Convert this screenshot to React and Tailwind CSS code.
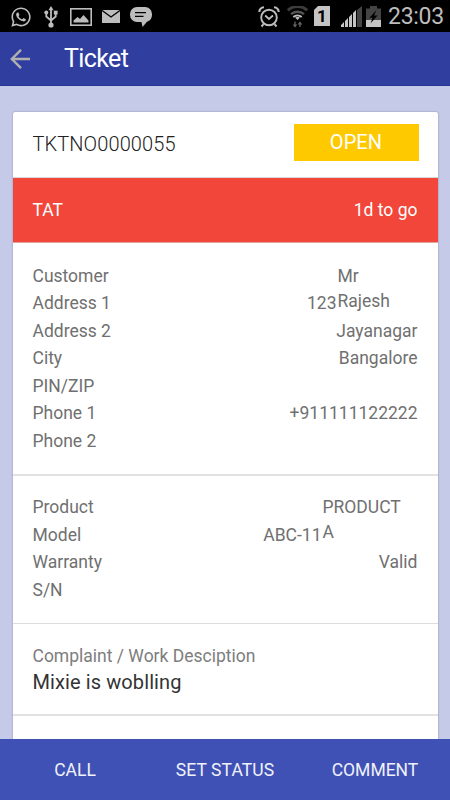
import React from 'react';
import { FaWhatsapp } from 'react-icons/fa';

const customerRows = [
  { label: 'Customer', value: 'Mr Rajesh', valueClass: 'w-[80px] pr-5 leading-[25px] pt-[1px]' },
  { label: 'Address 1', value: '123', valueClass: 'mr-[81px]' },
  { label: 'Address 2', value: 'Jayanagar' },
  { label: 'City', value: 'Bangalore' },
  { label: 'PIN/ZIP', value: '' },
  { label: 'Phone 1', value: '+911111122222' },
  { label: 'Phone 2', value: '' },
];

const productRows = [
  { label: 'Product', value: 'PRODUCT A', valueClass: 'w-[95px] pr-3 leading-[25px] pt-[1px]' },
  { label: 'Model', value: 'ABC-11', valueClass: 'mr-[96px]' },
  { label: 'Warranty', value: 'Valid' },
  { label: 'S/N', value: '' },
];

const StatusBar = () => (
  <div className="h-8 shrink-0 bg-black flex items-center justify-between pl-[10px] pr-[7px] text-[#bdbdbd]">
    <div className="flex items-center">
      <FaWhatsapp className="w-[22px] h-[22px] mt-[1px]" />
      <svg className="w-[14px] h-[22px] ml-[12px] mt-[2px]" viewBox="0 0 14 22" fill="none" stroke="currentColor" strokeWidth="1.8">
        <path d="M7 3v16M2.300 7v3.500L7 14.500M11.700 7v3.500L7 14.500" />
        <path d="M7 0l2.600 4.200H4.400z" fill="currentColor" stroke="none" />
        <circle cx="7" cy="19" r="2.600" fill="currentColor" stroke="none" />
        <circle cx="2.300" cy="6.500" r="2" fill="currentColor" stroke="none" />
        <path d="M9.800 4.700h3.800v3.800H9.800z" fill="currentColor" stroke="none" />
      </svg>
      <svg className="w-[22px] h-[18px] ml-[12px] mt-[2px]" viewBox="0 0 22 18" fill="none">
        <rect x="0.8" y="0.8" width="20.4" height="16.4" stroke="currentColor" strokeWidth="1.6" />
        <path d="M3.500 14.500v-2l4-3.500 2.500 2 3.500-4 5 5.500v2z" fill="currentColor" />
      </svg>
      <svg className="w-[18px] h-[13px] ml-[10px] mt-[1px]" viewBox="0 0 18 13">
        <rect width="18" height="13" fill="currentColor" />
        <path d="M0 0.500l9 6.500 9-6.500" fill="none" stroke="#000" strokeWidth="1.400" />
      </svg>
      <svg className="w-[22px] h-[20px] ml-[10px] mt-[2px]" viewBox="0 0 22 20">
        <path
          d="M7 0h8a7 7 0 0 1 7 7v1a7 7 0 0 1-5 6.700L12.500 20l-1-5H7a7 7 0 0 1-7-7V7a7 7 0 0 1 7-7z"
          fill="currentColor"
        />
        <path d="M5 5.700h11M5 9.300h8.500" stroke="#000" strokeWidth="1.300" />
      </svg>
    </div>

    <div className="flex items-center">
      <svg className="w-[22px] h-[22px] mt-[2px]" viewBox="0 0 22 22" fill="none" stroke="currentColor">
        <circle cx="11" cy="11.500" r="7.800" strokeWidth="1.900" />
        <path d="M1.300 6C1.500 3.500 3.500 1.500 6 1.300M20.700 6C20.500 3.500 18.500 1.500 16 1.300" strokeWidth="2.100" />
        <path d="M5.500 18.200l-2 2.300M16.500 18.200l2 2.300" strokeWidth="2" />
        <path d="M7.200 9.500l3.800 3.500 4-3.500" strokeWidth="1.800" />
      </svg>
      <svg className="w-[21px] h-[22px] ml-[7px] mt-[1px]" viewBox="0 0 21 22" fill="none">
        <path d="M0.800 4.300a14.500 14.500 0 0 1 19.400 0" stroke="#3c3c3c" strokeWidth="3" />
        <path d="M4 8.200a10 10 0 0 1 13 0" stroke="#555" strokeWidth="2.400" />
        <path d="M6.300 11a6.500 6.500 0 0 1 8.400 0" stroke="#bdbdbd" strokeWidth="1.800" />
        <path d="M10.500 14l-2.300-2.200a3.400 3.400 0 0 1 4.600 0z" fill="#bdbdbd" />
        <path d="M8 15.500v4.500M13 21v-4.500" stroke="#666" strokeWidth="1.300" />
        <path d="M5.700 18.500h4.600L8 21.500zM10.700 18.500h4.600L13 15.500z" fill="#666" />
      </svg>
      <div className="w-[16px] h-[20px] ml-[6px] bg-[#c4c4c4] text-black text-[17px] font-bold leading-[21px] text-center [clip-path:polygon(25%_0,100%_0,100%_100%,0_100%,0_20%)]">
        1
      </div>
      <svg className="w-[21px] h-[21px] ml-[11px]" viewBox="0 0 21 21">
        <path d="M0 21v-2l3-3v5zM4 21v-6l3-3v9zM8 21V11l3-3v13zM12 21V7l3-3v17z" fill="#c4c4c4" />
        <path d="M16 21V4l5-4v21z" fill="#444" />
      </svg>
      <svg className="w-[15px] h-[21px] ml-[4px]" viewBox="0 0 15 21">
        <path d="M4 0h7v2.500h4V15H0V2.500h4z" fill="#444" />
        <path d="M0 14h15v7H0z" fill="#c4c4c4" />
        <path d="M10.500 4L3.500 11.800h3.200L4.500 17.500l7-8H8z" fill="#000" />
      </svg>
      <span className="w-[55px] text-right ml-[7px] text-[23px] leading-8 mt-[1px] text-[#bdbdbd] tracking-[-0.3px]">23:03</span>
    </div>
  </div>
);

const Header = () => (
  <div className="h-[54px] shrink-0 bg-[#303f9f] border-b border-[#283593] flex items-center pl-[10px] text-white">
    <svg className="w-[21px] h-[20px] text-[#b0b0b0]" viewBox="0 0 21 20" fill="none" stroke="currentColor" strokeWidth="2.400">
      <path d="M20 10H1.800M11 0.800L1.800 10l9.200 9.200" />
    </svg>
    <h1 className="ml-[33px] text-[25px] tracking-[-0.600px]">Ticket</h1>
  </div>
);

const InfoRow = ({ label, value, valueClass = '' }) => (
  <div className="flex justify-between h-[27.5px] leading-[27.5px]">
    <span>{label}</span>
    <span className={valueClass}>{value}</span>
  </div>
);

const App = () => {
  return (
    <div className="h-[800px] w-[450px] flex flex-col overflow-hidden bg-[#c5cae9] font-[Roboto,sans-serif]">
      <StatusBar />
      <Header />

      <div className="flex-1 min-h-0 overflow-hidden pt-[26px] px-[12.5px]">
        <div className="h-[700px] bg-white rounded-[2px] shadow-[0_0_2px_rgba(0,0,0,0.35)] text-[17.5px] text-[#707070]">
          <div className="h-[66px] flex items-center justify-between pl-5 pr-[19px] border-b border-[#d8d8d8]">
            <span className="text-[20px] font-light tracking-[0.1px] -mt-[1px] text-[#212121]">TKTNO0000055</span>
            <span className="w-[125px] h-[37px] mb-[4px] bg-[#ffc900] text-white text-[20px] leading-[37px] tracking-[0.1px] text-center">
              OPEN
            </span>
          </div>

          <div className="h-[65px] flex items-center justify-between px-5 bg-[#f14639] border-b border-[#e0a5a0] text-white">
            <span>TAT</span>
            <span>1d to go</span>
          </div>

          <div className="h-[233px] pt-[19.5px] px-5 border-b-2 border-[#e2e2e2]">
            {customerRows.map((row) => (
              <InfoRow key={row.label} {...row} />
            ))}
          </div>

          <div className="h-[148px] pt-[18px] px-5 border-b border-[#dcdcdc]">
            {productRows.map((row) => (
              <InfoRow key={row.label} {...row} />
            ))}
          </div>

          <div className="h-[92px] pt-[20px] px-5 border-b-2 border-[#e2e2e2]">
            <p className="leading-[25px] text-[#7d7d7d]">Complaint / Work Desciption</p>
            <p className="text-[20px] leading-[26px] tracking-[0.1px] text-[#333]">Mixie is woblling</p>
          </div>
        </div>
      </div>

      <div className="h-[61px] shrink-0 bg-[#3f51b5] grid grid-cols-3 items-center pt-[2px] text-center text-[17.5px] text-[#f0f1fa]">
        <button>CALL</button>
        <button className="tracking-[0.1px]">SET STATUS</button>
        <button>COMMENT</button>
      </div>
    </div>
  );
};

export default App;
